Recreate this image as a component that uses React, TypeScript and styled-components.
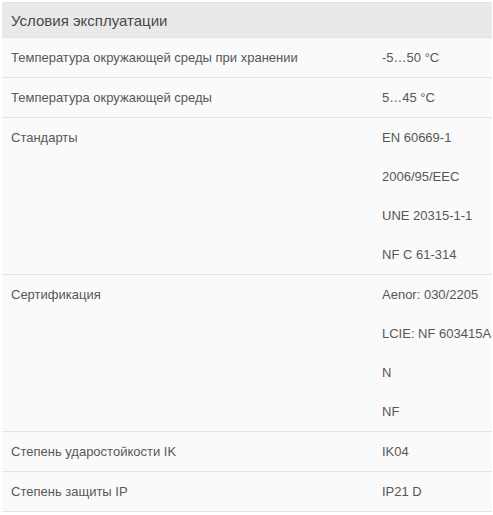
import React from "react";
import styled, { createGlobalStyle } from "styled-components";

interface Spec {
  label: string;
  values: string[];
}

const specs: Spec[] = [
  { label: "Температура окружающей среды при хранении", values: ["-5…50 °C"] },
  { label: "Температура окружающей среды", values: ["5…45 °C"] },
  {
    label: "Стандарты",
    values: ["EN 60669-1", "2006/95/EEC", "UNE 20315-1-1", "NF C 61-314"],
  },
  {
    label: "Сертификация",
    values: ["Aenor: 030/2205", "LCIE: NF 603415A", "N", "NF"],
  },
  { label: "Степень ударостойкости IK", values: ["IK04"] },
  { label: "Степень защиты IP", values: ["IP21 D"] },
];

const GlobalStyle = createGlobalStyle`
  body {
    margin: 0;
    background: #ffffff;
    font-family: "Liberation Sans", Arial, sans-serif;
  }
`;

const Wrapper = styled.div`
  padding: 2px 1px 0 2px;
`;

const Table = styled.section`
  width: 490px;
  background: #fafafa;
`;

const Header = styled.div`
  height: 34px;
  display: flex;
  align-items: center;
  padding: 0 9px;
  background: #e9e9e9;
  border-top: 1px solid #e2e2e2;
  border-bottom: 1px solid #e2e2e2;
  font-size: 15px;
  color: #4a4a4a;
`;

const Row = styled.div`
  display: grid;
  grid-template-columns: 371px 1fr;
  padding: 12px 9px;
  border-bottom: 1px solid #e4e4e4;
  font-size: 13px;
  line-height: 15px;
  color: #575757;
`;

const Label = styled.div``;

const Values = styled.div`
  display: flex;
  flex-direction: column;
  gap: 24px;
  white-space: nowrap;
`;

export default function App() {
  return (
    <>
      <GlobalStyle />
      <Wrapper>
        <Table>
          <Header>Условия эксплуатации</Header>
          {specs.map((s) => (
            <Row key={s.label}>
              <Label>{s.label}</Label>
              <Values>
                {s.values.map((v) => (
                  <span key={v}>{v}</span>
                ))}
              </Values>
            </Row>
          ))}
        </Table>
      </Wrapper>
    </>
  );
}
